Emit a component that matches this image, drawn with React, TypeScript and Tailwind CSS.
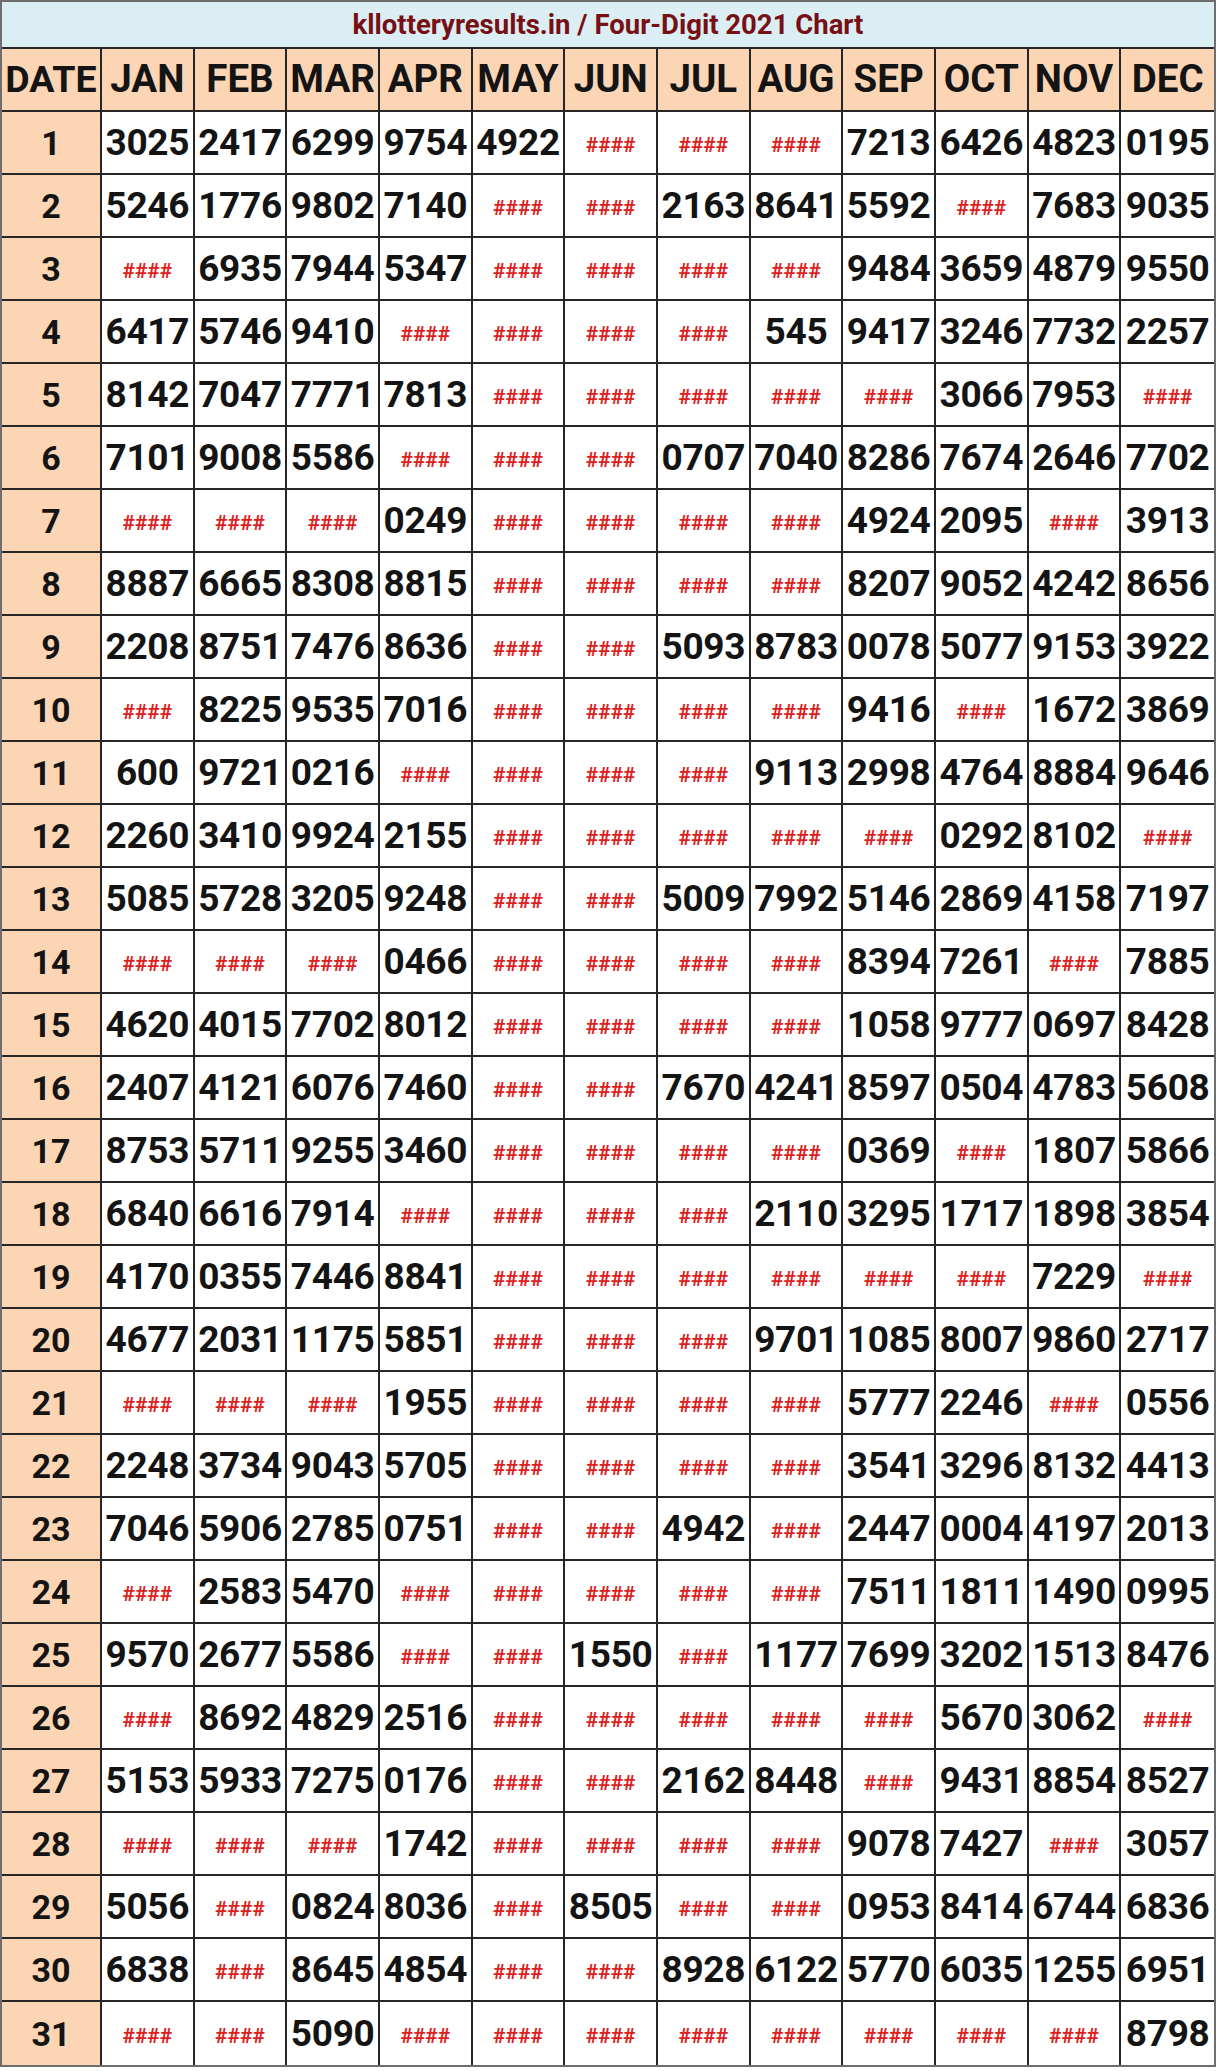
import React from "react";

const H = "H";
const rows: string[][] = [
  ["3025","2417","6299","9754","4922",H,H,H,"7213","6426","4823","0195"],
  ["5246","1776","9802","7140",H,H,"2163","8641","5592",H,"7683","9035"],
  [H,"6935","7944","5347",H,H,H,H,"9484","3659","4879","9550"],
  ["6417","5746","9410",H,H,H,H,"545","9417","3246","7732","2257"],
  ["8142","7047","7771","7813",H,H,H,H,H,"3066","7953",H],
  ["7101","9008","5586",H,H,H,"0707","7040","8286","7674","2646","7702"],
  [H,H,H,"0249",H,H,H,H,"4924","2095",H,"3913"],
  ["8887","6665","8308","8815",H,H,H,H,"8207","9052","4242","8656"],
  ["2208","8751","7476","8636",H,H,"5093","8783","0078","5077","9153","3922"],
  [H,"8225","9535","7016",H,H,H,H,"9416",H,"1672","3869"],
  ["600","9721","0216",H,H,H,H,"9113","2998","4764","8884","9646"],
  ["2260","3410","9924","2155",H,H,H,H,H,"0292","8102",H],
  ["5085","5728","3205","9248",H,H,"5009","7992","5146","2869","4158","7197"],
  [H,H,H,"0466",H,H,H,H,"8394","7261",H,"7885"],
  ["4620","4015","7702","8012",H,H,H,H,"1058","9777","0697","8428"],
  ["2407","4121","6076","7460",H,H,"7670","4241","8597","0504","4783","5608"],
  ["8753","5711","9255","3460",H,H,H,H,"0369",H,"1807","5866"],
  ["6840","6616","7914",H,H,H,H,"2110","3295","1717","1898","3854"],
  ["4170","0355","7446","8841",H,H,H,H,H,H,"7229",H],
  ["4677","2031","1175","5851",H,H,H,"9701","1085","8007","9860","2717"],
  [H,H,H,"1955",H,H,H,H,"5777","2246",H,"0556"],
  ["2248","3734","9043","5705",H,H,H,H,"3541","3296","8132","4413"],
  ["7046","5906","2785","0751",H,H,"4942",H,"2447","0004","4197","2013"],
  [H,"2583","5470",H,H,H,H,H,"7511","1811","1490","0995"],
  ["9570","2677","5586",H,H,"1550",H,"1177","7699","3202","1513","8476"],
  [H,"8692","4829","2516",H,H,H,H,H,"5670","3062",H],
  ["5153","5933","7275","0176",H,H,"2162","8448",H,"9431","8854","8527"],
  [H,H,H,"1742",H,H,H,H,"9078","7427",H,"3057"],
  ["5056",H,"0824","8036",H,"8505",H,H,"0953","8414","6744","6836"],
  ["6838",H,"8645","4854",H,H,"8928","6122","5770","6035","1255","6951"],
  [H,H,"5090",H,H,H,H,H,H,H,H,"8798"],
];

const months = ["JAN","FEB","MAR","APR","MAY","JUN","JUL","AUG","SEP","OCT","NOV","DEC"];

const font = { fontFamily: "Roboto, 'Liberation Sans', sans-serif" };

export default function App() {
  return (
    <div className="w-[1216px] bg-white" style={font}>
      <div className="border-2 border-[#6e6e6e]">
        <div className="h-[47px] bg-[#dbeef3] border-b-2 border-[#262626] flex items-center justify-center">
          <span className="text-[27.5px] font-bold text-[#771015] leading-none">
            kllotteryresults.in / Four-Digit 2021 Chart
          </span>
        </div>
        <div className="grid grid-cols-[100px_repeat(12,minmax(0,1fr))]">
          <div className="h-[63px] bg-[#fcd5b4] border-r-2 border-b-2 border-[#262626] flex items-center justify-center text-[37.5px] font-bold text-[#141414] leading-none whitespace-nowrap">
            DATE
          </div>
          {months.map((m, i) => (
            <div
              key={m}
              className={`h-[63px] bg-[#fcd5b4] border-b-2 border-[#262626] flex items-center justify-center text-[38.5px] font-bold text-[#141414] leading-none whitespace-nowrap ${i < 11 ? "border-r-2" : ""}`}
            >
              {m}
            </div>
          ))}
          {rows.map((r, ri) => {
            const last = ri === rows.length - 1;
            return (
              <React.Fragment key={ri}>
                <div
                  className={`h-[63px] bg-[#fcd5b4] border-r-2 border-[#262626] flex items-center justify-center text-[34px] font-bold text-[#141414] leading-none ${last ? "" : "border-b-2"}`}
                >
                  {ri + 1}
                </div>
                {r.map((v, ci) => (
                  <div
                    key={ci}
                    className={`h-[63px] bg-white border-[#262626] flex items-center justify-center text-[37px] font-bold text-[#141414] whitespace-nowrap ${ci < 11 ? "border-r-2" : ""} ${last ? "" : "border-b-2"}`}
                  >
                    <div className="leading-[40px] text-center">
                      {v === H ? (
                        <span className="text-[21px] text-[#dc1f1f] font-bold">####</span>
                      ) : (
                        <span className="tracking-[-0.3px]">{v}</span>
                      )}
                    </div>
                  </div>
                ))}
              </React.Fragment>
            );
          })}
        </div>
      </div>
    </div>
  );
}
